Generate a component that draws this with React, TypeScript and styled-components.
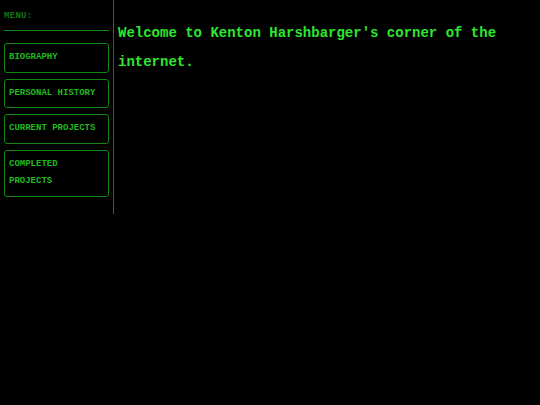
import React from 'react';
import styled, { createGlobalStyle } from 'styled-components';

const GlobalStyle = createGlobalStyle`
  html, body {
    margin: 0;
    padding: 0;
    background: #000;
  }
  body {
    font-family: "Liberation Mono", "Courier New", monospace;
  }
`;

const Page = styled.div`
  display: flex;
  align-items: flex-start;
  min-height: 405px;
  background: #000;
`;

const Sidebar = styled.nav`
  width: 105px;
  padding: 8px 4px 17px 4px;
  border-right: 1px solid #107a10;
  display: flex;
  flex-direction: column;
`;

const MenuLabel = styled.div`
  color: #137613;
  font-size: 9px;
  font-weight: bold;
  line-height: 17px;
  letter-spacing: 0.3px;
`;

const Rule = styled.hr`
  margin: 5px 0 12px 0;
  border: none;
  border-top: 1px solid #138413;
  height: 0;
`;

const MenuList = styled.div`
  display: flex;
  flex-direction: column;
  gap: 6px;
`;

const MenuButton = styled.button`
  display: block;
  width: 100%;
  text-align: left;
  background: #000;
  border: 1px solid #128612;
  border-radius: 3px;
  padding: 5px 4px;
  color: #22b822;
  font-family: "Liberation Mono", "Courier New", monospace;
  font-weight: bold;
  font-size: 9px;
  line-height: 17.5px;
  cursor: pointer;
`;

const Main = styled.main`
  flex: 1;
  padding: 19px 20px 0 4px;
`;

const Welcome = styled.h1`
  margin: 0;
  color: #2fe62f;
  font-family: "Liberation Mono", "Courier New", monospace;
  font-weight: bold;
  font-size: 14px;
  line-height: 29px;
`;

const items = ['BIOGRAPHY', 'PERSONAL HISTORY', 'CURRENT PROJECTS', 'COMPLETED PROJECTS'];

function App(): JSX.Element {
  return (
    <>
      <GlobalStyle />
      <Page>
        <Sidebar>
          <MenuLabel>MENU:</MenuLabel>
          <Rule />
          <MenuList>
            {items.map((item) => (
              <MenuButton key={item}>{item}</MenuButton>
            ))}
          </MenuList>
        </Sidebar>
        <Main>
          <Welcome>Welcome to Kenton Harshbarger's corner of the internet.</Welcome>
        </Main>
      </Page>
    </>
  );
}

export default App;
